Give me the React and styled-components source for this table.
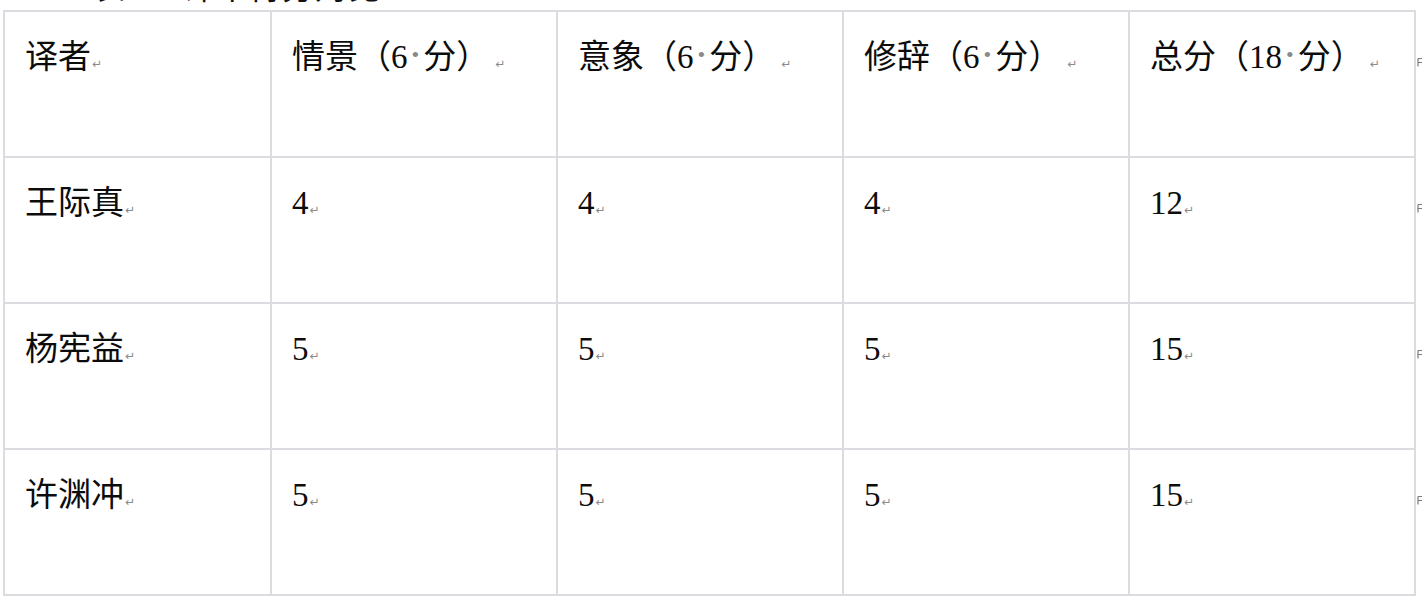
import styled, { createGlobalStyle } from "styled-components";

const GlobalStyle = createGlobalStyle`
  html, body {
    margin: 0;
    padding: 0;
    background: #fff;
  }
  body {
    font-family: "Liberation Serif", "Noto Sans CJK SC", serif;
    color: #111;
  }
`;

const headers = ["译者", "情景（6·分）", "意象（6·分）", "修辞（6·分）", "总分（18·分）"];

const rows = [
  ["王际真", "4", "4", "4", "12"],
  ["杨宪益", "5", "5", "5", "15"],
  ["许渊冲", "5", "5", "5", "15"],
];

export default function App() {
  return (
    <Page>
      <GlobalStyle />
      <CutLine>
        <span>表3 三译本得分对比</span>
      </CutLine>
      <TableWrap>
        <ScoreTable>
          <colgroup>
            <col style={{ width: 267 }} />
            <col style={{ width: 286 }} />
            <col style={{ width: 286 }} />
            <col style={{ width: 286 }} />
            <col style={{ width: 286 }} />
          </colgroup>
          <tbody>
            <tr>
              {headers.map((h) => (
                <Cell key={h}>
                  <CellText text={h} />
                </Cell>
              ))}
            </tr>
            {rows.map((r) => (
              <tr key={r[0]}>
                {r.map((v, i) => (
                  <Cell key={i}>
                    <CellText text={v} />
                  </Cell>
                ))}
              </tr>
            ))}
          </tbody>
        </ScoreTable>
        <RowMarks>
          {[0, 1, 2, 3].map((i) => (
            <RowMark key={i}>
              <svg width="7" height="9" viewBox="0 0 7 9">
                <path d="M1 0.5 V8.5 M1 0.5 H6 V4.5 H1" fill="none" stroke="#7a7a7a" strokeWidth="1.2" />
              </svg>
            </RowMark>
          ))}
        </RowMarks>
      </TableWrap>
    </Page>
  );
}

function CellText({ text }) {
  const parts = text.split("·");
  return (
    <Line>
      {parts.map((p, i) => (
        <span key={i}>
          {p}
          {i < parts.length - 1 && <SpaceDot>•</SpaceDot>}
        </span>
      ))}
      <Return $wide={text.endsWith("）")}>↵</Return>
    </Line>
  );
}

const Page = styled.div`
  width: 1422px;
  height: 605px;
  overflow: hidden;
  background: #fff;
`;

const CutLine = styled.div`
  height: 10px;
  overflow: hidden;
  padding-left: 92px;
  font-size: 33px;
  line-height: 33px;
  span {
    display: block;
    margin-top: -28px;
    white-space: nowrap;
  }
`;

const TableWrap = styled.div`
  display: flex;
  padding-left: 3px;
`;

const ScoreTable = styled.table`
  border-collapse: collapse;
  table-layout: fixed;
  width: 1411px;
`;

const Cell = styled.td`
  border: 2px solid #dcdce0;
  height: 146px;
  padding: 25px 20px 0 20px;
  vertical-align: top;
  box-sizing: border-box;
`;

const Line = styled.div`
  font-size: 33px;
  line-height: 40px;
  white-space: nowrap;
  color: #0c0c0c;
`;

const SpaceDot = styled.span`
  color: #8a8a8a;
  font-size: 22px;
  position: relative;
  top: -6px;
  margin: 0 4px;
`;

const Return = styled.span`
  color: #8a8a8a;
  font-size: 12px;
  font-family: "DejaVu Sans", sans-serif;
  margin-left: ${(p) => (p.$wide ? "6px" : "1px")};
`;

const RowMarks = styled.div`
  display: flex;
  flex-direction: column;
  padding-top: 48px;
  gap: 137px;
  margin-left: 1px;
`;

const RowMark = styled.div`
  height: 9px;
  line-height: 0;
`;
